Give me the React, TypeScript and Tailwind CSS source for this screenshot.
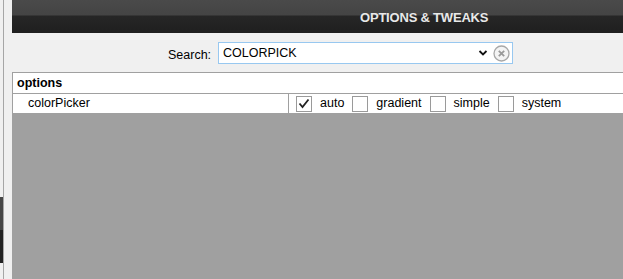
import { useState } from "react"

const choices = ["auto", "gradient", "simple", "system"]

function Box({ on }: { on: boolean }) {
  return (
    <span className="flex h-[16px] w-[16px] items-center justify-center border border-[#9a9a9a] bg-white">
      {on && (
        <svg width="12" height="11" viewBox="0 0 12 11">
          <path d="M1.5 5.5 L4.5 9 L10.5 1.5" fill="none" stroke="#222" strokeWidth="1.8" />
        </svg>
      )}
    </span>
  )
}

export default function App() {
  const [picked, setPicked] = useState("auto")

  return (
    <div className="flex h-[279px] w-[623px] overflow-hidden bg-[#f0f0f0] font-['Liberation_Sans',Arial,sans-serif] text-[12.5px] text-black">
      {/* edge of the neighbouring panel */}
      <div className="flex w-[3px] flex-col pt-[197px]">
        <div className="h-[33px] bg-[#464646]" />
        <div className="h-[33px] bg-[#232323]" />
      </div>
      <div className="w-px bg-[#a6a6a6]" />
      <div className="w-[8px]" />

      <div className="flex min-w-0 flex-1 flex-col">
        {/* Header */}
        <div className="h-[33px] shrink-0 bg-[linear-gradient(to_bottom,#4a4a4a_0px,#444_15px,#262626_16px,#1f1f1f_33px)] pl-[348px] pt-[9px]">
          <span className="whitespace-nowrap text-[13px] font-bold leading-[15px] tracking-[-0.2px] text-[#e8e8e8]">OPTIONS &amp; TWEAKS</span>
        </div>

        {/* Search */}
        <div className="flex h-[39px] shrink-0 items-start pl-[156px] pt-[9px]">
          <span className="mt-[4px] w-[50px]">Search:</span>
          <div className="flex h-[22px] w-[295px] items-center border border-[#98c8f0] bg-white pl-[4px] pr-[2px]">
            <span className="flex-1">COLORPICK</span>
            <svg width="10" height="8" viewBox="0 0 10 8" className="mr-[5px]">
              <path d="M1.5 2 L5 5.5 L8.5 2" fill="none" stroke="#111" strokeWidth="1.8" />
            </svg>
            <svg width="17" height="17" viewBox="0 0 17 17">
              <circle cx="8.5" cy="8.5" r="7.5" fill="#f4f4f4" stroke="#a8a8a8" strokeWidth="1.3" />
              <path d="M5.8 5.8 L11.2 11.2 M11.2 5.8 L5.8 11.2" stroke="#9a9a9a" strokeWidth="1.8" />
            </svg>
          </div>
        </div>

        {/* Options table */}
        <div className="flex flex-1 flex-col border-l border-t border-[#a0a0a0] bg-[#a0a0a0]">
          <div className="flex h-[21px] items-center border-b border-[#a0a0a0] bg-white pl-[4px] font-bold">
            options
          </div>
          <div className="flex h-[20px] items-center border-b border-[#a0a0a0] bg-white">
            <div className="flex h-full w-[276px] items-center border-r border-[#a0a0a0] pl-[15px]">colorPicker</div>
            <div className="flex items-center pl-[7px]">
              {choices.map((c) => (
                <label key={c} className="mr-[8px] flex cursor-pointer items-center" onClick={() => setPicked(c)}>
                  <Box on={picked === c} />
                  <span className="ml-[8px]">{c}</span>
                </label>
              ))}
            </div>
          </div>
        </div>
      </div>
    </div>
  )
}
